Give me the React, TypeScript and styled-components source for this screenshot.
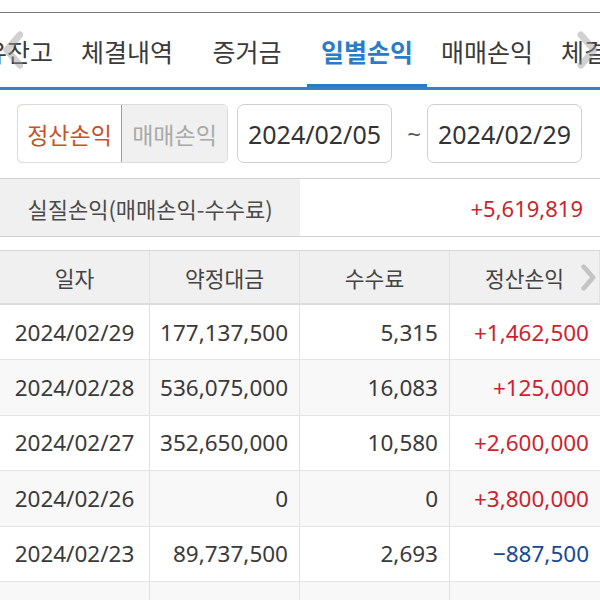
import React from 'react';
import styled, { createGlobalStyle } from 'styled-components';

const GlobalStyle = createGlobalStyle`
  html, body {
    margin: 0;
    padding: 0;
    background: #fff;
  }
  body {
    font-family: 'Noto Sans CJK KR', 'Noto Sans', sans-serif;
    color: #333;
  }
`;

const Page = styled.div`
  width: 600px;
  height: 600px;
  overflow: hidden;
  padding-top: 12px;
  box-sizing: border-box;
`;

const TabBar = styled.div`
  position: relative;
  height: 78px;
  border-top: 1px solid #7a7a7a;
  border-bottom: 3px solid #3a7fc1;
  box-sizing: border-box;
  overflow: hidden;
`;

const TabStrip = styled.div`
  display: flex;
  height: 100%;
  margin-left: -53px;
`;

const Tab = styled.div<{ $active?: boolean }>`
  flex: 0 0 120px;
  display: flex;
  align-items: center;
  justify-content: center;
  font-size: 25px;
  white-space: nowrap;
  color: ${p => (p.$active ? '#2a7cc7' : '#3a3a3a')};
  font-weight: ${p => (p.$active ? 700 : 400)};
  box-shadow: ${p => (p.$active ? 'inset 0 -3px 0 #2a7cc7' : 'none')};
  padding-top: 2px;
  box-sizing: border-box;
`;

const Arrow = styled.div<{ $side: 'left' | 'right' }>`
  position: absolute;
  top: 17px;
  ${p => (p.$side === 'left' ? 'left: 0;' : 'right: 0;')}
  width: 24px;
  height: 40px;
  display: flex;
  align-items: center;
  justify-content: center;
  opacity: 0.45;
`;

const FilterRow = styled.div`
  display: flex;
  align-items: center;
  padding: 14px 0 0 17px;
  height: 59px;
`;

const Toggle = styled.div`
  display: flex;
  height: 59px;
  border-radius: 5px;
  overflow: hidden;
  border: 1px solid #dcdcdc;
  box-sizing: border-box;
`;

const ToggleButton = styled.div<{ $on?: boolean }>`
  width: 105px;
  display: flex;
  align-items: center;
  justify-content: center;
  font-size: 23px;
  white-space: nowrap;
  box-sizing: border-box;
  color: ${p => (p.$on ? '#c9502b' : '#a9a9a9')};
  background: ${p => (p.$on ? '#fff' : '#f0f0f0')};
  border: ${p => (p.$on ? '1px solid #d98a6c' : 'none')};
  border-radius: ${p => (p.$on ? '5px 0 0 5px' : '0')};
  margin: ${p => (p.$on ? '-1px 0 -1px -1px' : '0')};
`;

const DateBox = styled.div`
  width: 155px;
  height: 59px;
  margin-left: 9px;
  border: 1px solid #cfcfcf;
  border-radius: 7px;
  box-sizing: border-box;
  display: flex;
  align-items: center;
  justify-content: center;
  font-size: 25px;
  color: #333;
  font-family: 'Noto Sans', sans-serif;
`;

const Tilde = styled.span`
  width: 26px;
  margin-left: 9px;
  margin-right: -9px;
  text-align: center;
  font-size: 24px;
  color: #555;
  font-family: 'Noto Sans', sans-serif;
`;

const Summary = styled.div`
  display: grid;
  grid-template-columns: 300px 300px;
  height: 59px;
  margin-top: 15px;
  border-top: 1px solid #d2d2d2;
  border-bottom: 1px solid #d2d2d2;
  box-sizing: border-box;
`;

const SummaryLabel = styled.div`
  background: #f0f0f0;
  display: flex;
  align-items: center;
  justify-content: center;
  font-size: 22px;
  white-space: nowrap;
  color: #4a4a4a;
`;

const SummaryValue = styled.div`
  display: flex;
  align-items: center;
  justify-content: flex-end;
  padding-right: 17px;
  font-size: 22px;
  color: #cf1f2e;
  font-family: 'Noto Sans', sans-serif;
`;

const Table = styled.div`
  margin-top: 13px;
  border-top: 1px solid #d8d8d8;
`;

const Row = styled.div<{ $head?: boolean; $alt?: boolean }>`
  position: relative;
  display: grid;
  grid-template-columns: 150px 150px 150px 150px;
  height: ${p => (p.$head ? '54px' : '55.4px')};
  background: ${p => (p.$head ? '#f0f0f0' : p.$alt ? '#f8f8f8' : '#fff')};
  border-bottom: ${p => (p.$head ? '2px solid #dcdcdc' : '1px solid #e4e4e4')};
  box-sizing: border-box;
`;

const Cell = styled.div<{ $align?: 'center' | 'right'; $color?: string; $head?: boolean }>`
  display: flex;
  align-items: center;
  justify-content: ${p => (p.$align === 'right' ? 'flex-end' : 'center')};
  padding-right: ${p => (p.$align === 'right' ? '11px' : '0')};
  border-right: 1px solid #e2e2e2;
  font-size: ${p => (p.$head ? '21.5px' : '22.5px')};
  white-space: nowrap;
  color: ${p => p.$color || (p.$head ? '#444' : '#3a3a3a')};
  font-family: ${p => (p.$head ? "'Noto Sans CJK KR', sans-serif" : "'Noto Sans', sans-serif")};
  &:last-child {
    border-right: none;
  }
`;

const HeadChevron = styled.div`
  position: absolute;
  right: 3px;
  top: 13px;
`;

const RED = '#cf1f2e';
const BLUE = '#164a93';

const rows = [
  { date: '2024/02/29', amount: '177,137,500', fee: '5,315', pnl: '+1,462,500' },
  { date: '2024/02/28', amount: '536,075,000', fee: '16,083', pnl: '+125,000' },
  { date: '2024/02/27', amount: '352,650,000', fee: '10,580', pnl: '+2,600,000' },
  { date: '2024/02/26', amount: '0', fee: '0', pnl: '+3,800,000' },
  { date: '2024/02/23', amount: '89,737,500', fee: '2,693', pnl: '-887,500' },
  { date: '', amount: '', fee: '', pnl: '' },
];

const tabs = ['보유잔고', '체결내역', '증거금', '일별손익', '매매손익', '체결내역'];

const Chevron: React.FC<{ dir: 'left' | 'right'; size: number; color?: string }> = ({ dir, size, color = '#9a9a9a' }) => (
  <svg width={size * 0.6} height={size} viewBox="0 0 12 20">
    <path
      d={dir === 'left' ? 'M10 2 L3 10 L10 18' : 'M2 2 L9 10 L2 18'}
      fill="none"
      stroke={color}
      strokeWidth="3.5"
      strokeLinecap="round"
      strokeLinejoin="round"
    />
  </svg>
);

const App: React.FC = () => (
  <Page>
    <GlobalStyle />
    <TabBar>
      <TabStrip>
        {tabs.map((t, i) => (
          <Tab key={i} $active={i === 3}>
            {t}
          </Tab>
        ))}
      </TabStrip>
      <Arrow $side="left">
        <Chevron dir="left" size={38} />
      </Arrow>
      <Arrow $side="right">
        <Chevron dir="right" size={38} />
      </Arrow>
    </TabBar>

    <FilterRow>
      <Toggle>
        <ToggleButton $on>정산손익</ToggleButton>
        <ToggleButton>매매손익</ToggleButton>
      </Toggle>
      <DateBox>2024/02/05</DateBox>
      <Tilde>~</Tilde>
      <DateBox>2024/02/29</DateBox>
    </FilterRow>

    <Summary>
      <SummaryLabel>실질손익(매매손익-수수료)</SummaryLabel>
      <SummaryValue>+5,619,819</SummaryValue>
    </Summary>

    <Table>
      <Row $head>
        <Cell $head>일자</Cell>
        <Cell $head>약정대금</Cell>
        <Cell $head>수수료</Cell>
        <Cell $head>정산손익</Cell>
        <HeadChevron>
          <Chevron dir="right" size={27} color="#c4c4c4" />
        </HeadChevron>
      </Row>
      {rows.map((r, i) => (
        <Row key={i} $alt={i % 2 === 1}>
          <Cell>{r.date}</Cell>
          <Cell $align="right">{r.amount}</Cell>
          <Cell $align="right">{r.fee}</Cell>
          <Cell $align="right" $color={r.pnl.startsWith('-') ? BLUE : RED}>
            {r.pnl.startsWith('-') ? '\u2212' + r.pnl.slice(1) : r.pnl}
          </Cell>
        </Row>
      ))}
    </Table>
  </Page>
);

export default App;
